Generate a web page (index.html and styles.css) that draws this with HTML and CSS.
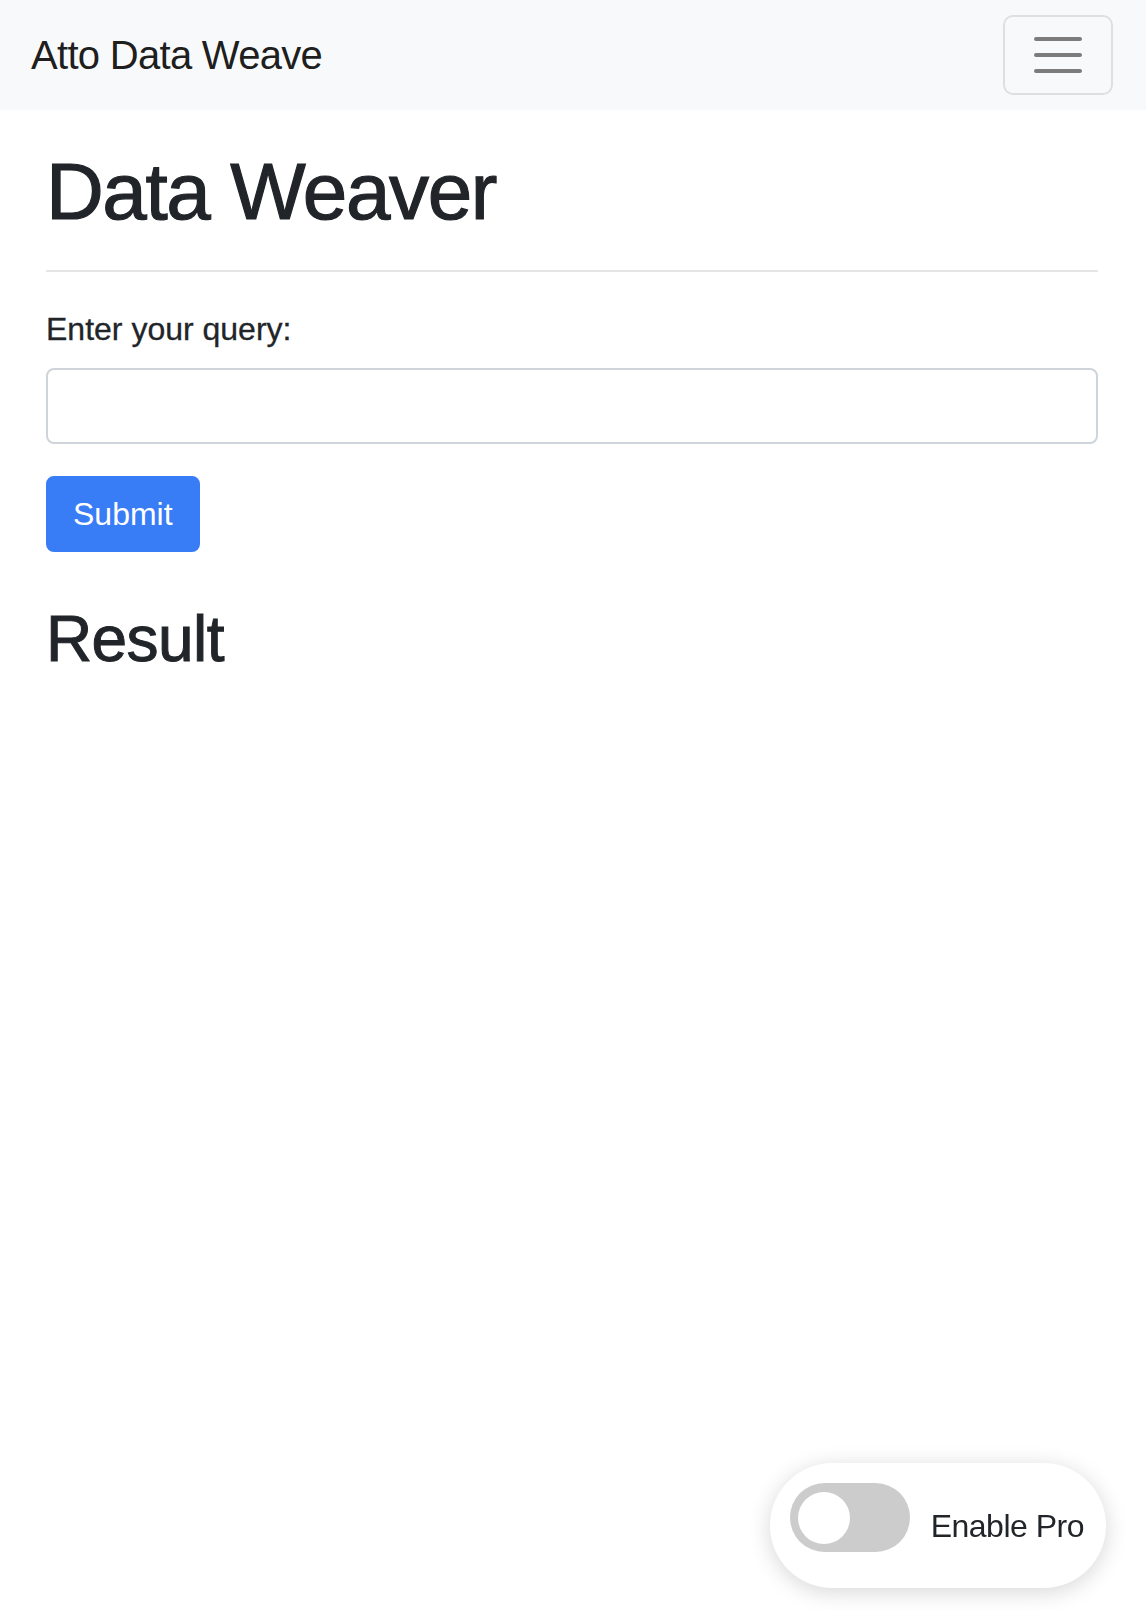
FILE: index.html
```html
<!DOCTYPE html>
<html lang="en">
<head>
    <meta charset="UTF-8">
    <meta name="viewport" content="width=device-width, initial-scale=1.0">
    <title>Atto Data Weave</title>
    <link rel="stylesheet" href="styles.css">
</head>
<body>

<nav class="navbar">
    <a class="brand" href="#">Atto Data Weave</a>
    <button class="toggler" type="button" aria-label="Toggle navigation">
        <svg width="60" height="60" viewBox="0 0 60 60">
            <path d="M8 14h44M8 30h44M8 46h44" stroke="rgba(0,0,0,0.5)" stroke-width="4" stroke-linecap="round" fill="none"/>
        </svg>
    </button>
</nav>

<div class="container">
    <h1>Data Weaver</h1>
    <hr>
    <form class="query-form" onsubmit="return false;">
        <label for="query">Enter your query:</label>
        <input type="text" id="query" class="form-control">
        <button type="submit" class="btn-primary">Submit</button>
    </form>
    <h2>Result</h2>
    <div id="result"></div>
</div>

<label class="pro-toggle">
    <input type="checkbox" id="proSwitch">
    <span class="slider"></span>
    <span class="pro-text">Enable Pro</span>
</label>

</body>
</html>
```

FILE: styles.css
```css
* {
    box-sizing: border-box;
}
body {
    margin: 0;
    font-family: "Liberation Sans", Arial, sans-serif;
    font-size: 32px;
    line-height: 1.5;
    color: #212529;
    background-color: #fff;
}
a {
    color: inherit;
    text-decoration: none;
}
.navbar {
    display: flex;
    justify-content: space-between;
    align-items: center;
    height: 110px;
    padding: 0 33px 0 31px;
    background-color: #f8f9fa;
}
.brand {
    font-size: 40px;
    line-height: 1.5;
    letter-spacing: -0.7px;
    color: rgba(0, 0, 0, 0.9);
}
.toggler {
    display: flex;
    align-items: center;
    justify-content: center;
    width: 110px;
    height: 80px;
    padding: 0;
    background: transparent;
    border: 2px solid rgba(0, 0, 0, 0.1);
    border-radius: 10px;
    cursor: pointer;
}
.container {
    padding: 0 48px 0 46px;
}
h1 {
    margin: 34px 0 30px;
    font-size: 80px;
    font-weight: 500;
    line-height: 1.2;
    letter-spacing: -1.4px;
    -webkit-text-stroke: 1.2px currentColor;
}
hr {
    height: 0;
    margin: 0;
    border: 0;
    border-top: 2px solid rgba(0, 0, 0, 0.1);
}
.query-form label {
    display: block;
    margin: 33px 0 15px;
    -webkit-text-stroke: 0.3px currentColor;
}
.form-control {
    display: block;
    width: 100%;
    height: 76px;
    padding: 12px 24px;
    font: inherit;
    color: #495057;
    background-color: #fff;
    border: 2px solid #ced4da;
    border-radius: 8px;
}
.btn-primary {
    display: block;
    margin-top: 32px;
    height: 76px;
    padding: 12px 25px;
    font: inherit;
    color: #fff;
    background-color: #387cf6;
    border: 2px solid #387cf6;
    border-radius: 8px;
    cursor: pointer;
}
h2 {
    margin: 49px 0 16px;
    font-size: 64px;
    font-weight: 500;
    line-height: 1.2;
    letter-spacing: -0.6px;
    -webkit-text-stroke: 1px currentColor;
}
.pro-toggle {
    position: fixed;
    right: 40px;
    bottom: 22px;
    display: flex;
    align-items: center;
    gap: 21px;
    height: 125px;
    padding: 20px 22px 20px 20px;
    background-color: #fff;
    border-radius: 63px;
    box-shadow: 0 4px 22px rgba(0, 0, 0, 0.16);
    cursor: pointer;
}
.pro-toggle input {
    display: none;
}
.slider {
    position: relative;
    align-self: flex-start;
    width: 120px;
    height: 69px;
    background-color: #ccc;
    border-radius: 35px;
    transition: background-color 0.3s;
}
.slider::before {
    content: "";
    position: absolute;
    left: 8px;
    top: 8.5px;
    width: 52px;
    height: 52px;
    background-color: #fff;
    border-radius: 50%;
    transition: transform 0.3s;
}
.pro-toggle input:checked + .slider {
    background-color: #387cf6;
}
.pro-toggle input:checked + .slider::before {
    transform: translateX(52px);
}
.pro-text {
    font-size: 32px;
    line-height: 1.5;
    letter-spacing: -0.5px;
}
```
